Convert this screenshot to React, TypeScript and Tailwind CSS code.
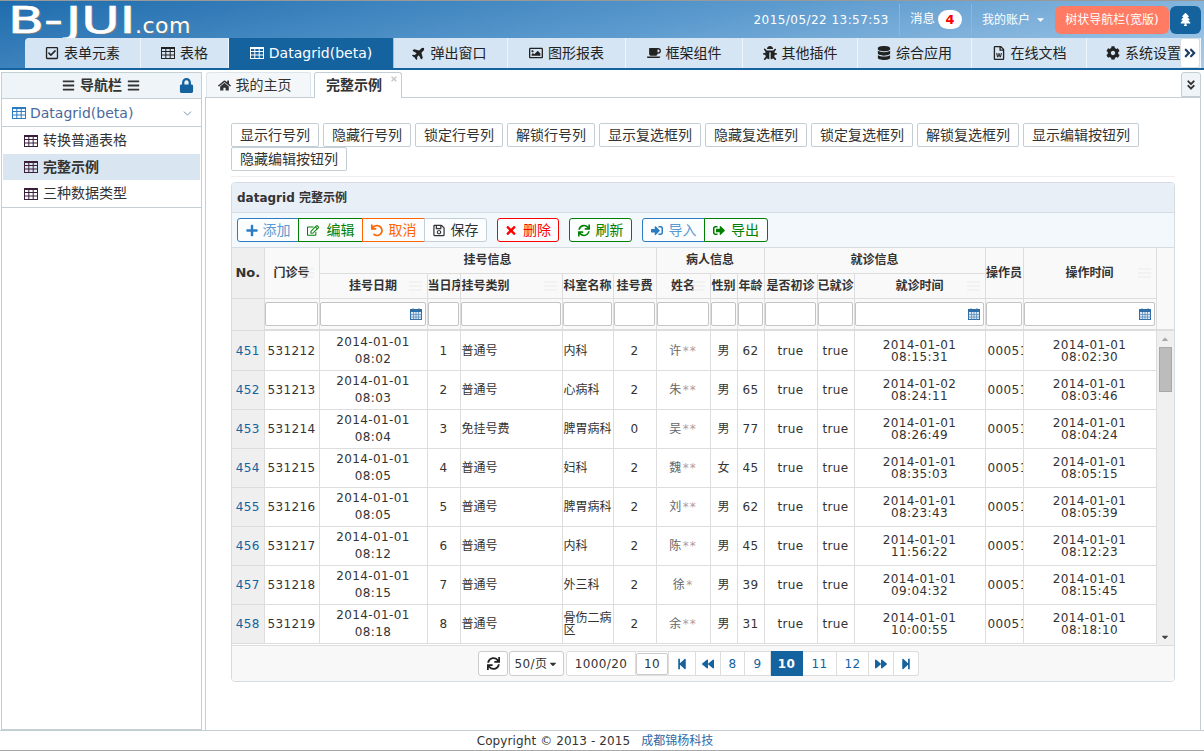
import React from "react";
import { ChevronDown } from "lucide-react";
import {
  FaRegCheckSquare, FaPlane, FaRegImage, FaCoffee, FaBug, FaDatabase, FaRegFileWord, FaCog,
  FaAngleDoubleRight, FaAngleDoubleDown, FaBars, FaLock, FaHome, FaPlus, FaRegEdit, FaUndo, FaRegSave,
  FaTimes, FaSync, FaSignInAlt, FaSignOutAlt, FaTree, FaStepBackward, FaBackward, FaForward,
  FaStepForward, FaCaretDown, FaCaretUp,
} from "react-icons/fa";

function GridIcon({ cls = "" }: { cls?: string }) {
  return (
    <svg viewBox="0 0 14 12" className={"inline-block w-[14px] h-[12px] " + cls} fill="none" stroke="currentColor" strokeWidth="1">
      <rect x="0.5" y="0.5" width="13" height="11" strokeWidth="1" />
      <path d="M0.5 1.5H13.5" />
      <path d="M0.5 4.5H13.5M0.5 8H13.5M4.8 0.5V11.5M9.2 0.5V11.5" />
    </svg>
  );
}

function CalIcon() {
  return (
    <svg viewBox="0 0 12 12" className="absolute right-[3px] top-[5px] w-[12px] h-[12px]" fill="none">
      <rect x="0.5" y="1.5" width="11" height="10" fill="#dbe7f3" stroke="#2f6da8" />
      <rect x="0.5" y="1.5" width="11" height="2.5" fill="#2f6da8" />
      <path d="M3 0.5V2.5M9 0.5V2.5" stroke="#2f6da8" strokeWidth="1.4" />
      <path d="M0.5 6.5H11.5M0.5 9H11.5M3.5 4V11.5M6 4V11.5M8.5 4V11.5" stroke="#5e8fbd" strokeWidth="0.8" />
    </svg>
  );
}

const topTabs = [
  { w: "w-[116px]", icon: <FaRegCheckSquare />, t: "表单元素", cls: "rounded-tl-[4px]" },
  { w: "w-[88px]", icon: <GridIcon />, t: "表格" },
  { w: "w-[165px]", icon: <GridIcon />, t: "Datagrid(beta)", active: true },
  { w: "w-[114px]", icon: <FaPlane className="-rotate-45" />, t: "弹出窗口", cls: "pr-[3px]" },
  { w: "w-[118px]", icon: <FaRegImage />, t: "图形报表" },
  { w: "w-[117px]", icon: <FaCoffee />, t: "框架组件" },
  { w: "w-[115px]", icon: <FaBug />, t: "其他插件" },
  { w: "w-[114px]", icon: <FaDatabase />, t: "综合应用" },
  { w: "w-[115px]", icon: <FaRegFileWord />, t: "在线文档" },
  { w: "w-[114px]", icon: <FaCog />, t: "系统设置" },
];

const colBtns = [
  ["显示行号列", "w-[88px]"], ["隐藏行号列", "w-[88px]"], ["锁定行号列", "w-[88px]"], ["解锁行号列", "w-[88px]"],
  ["显示复选框列", "w-[102px]"], ["隐藏复选框列", "w-[102px]"], ["锁定复选框列", "w-[102px]"], ["解锁复选框列", "w-[102px]"],
  ["显示编辑按钮列", "w-[116px]"], ["隐藏编辑按钮列", "w-[116px]"],
];

const widths = [32, 55, 108, 33, 102, 51, 43, 54, 27, 27, 53, 37, 131, 38, 133];

const rows = [
  [451, 531212, "2014-01-01", "08:02", 1, "普通号", "内科", 2, "许", "**", "男", 62, "2014-01-01", "08:15:31", "2014-01-01", "08:02:30"],
  [452, 531213, "2014-01-01", "08:03", 2, "普通号", "心病科", 2, "朱", "**", "男", 65, "2014-01-02", "08:24:11", "2014-01-01", "08:03:46"],
  [453, 531214, "2014-01-01", "08:04", 3, "免挂号费", "脾胃病科", 0, "吴", "**", "男", 77, "2014-01-01", "08:26:49", "2014-01-01", "08:04:24"],
  [454, 531215, "2014-01-01", "08:05", 4, "普通号", "妇科", 2, "魏", "**", "女", 45, "2014-01-01", "08:35:03", "2014-01-01", "08:05:15"],
  [455, 531216, "2014-01-01", "08:05", 5, "普通号", "脾胃病科", 2, "刘", "**", "男", 62, "2014-01-01", "08:23:43", "2014-01-01", "08:05:39"],
  [456, 531217, "2014-01-01", "08:12", 6, "普通号", "内科", 2, "陈", "**", "男", 45, "2014-01-01", "11:56:22", "2014-01-01", "08:12:23"],
  [457, 531218, "2014-01-01", "08:15", 7, "普通号", "外三科", 2, "徐", "*", "男", 39, "2014-01-01", "09:04:32", "2014-01-01", "08:15:45"],
  [458, 531219, "2014-01-01", "08:18", 8, "普通号", "骨伤二病区", 2, "余", "**", "男", 31, "2014-01-01", "10:00:55", "2014-01-01", "08:18:10"],
] as const;

function Grip() {
  return (
    <span className="absolute right-[5px] top-1/2 -translate-y-1/2 flex flex-col gap-[3px] w-[13px]">
      <i className="block h-[1px] bg-[#ececec]" />
      <i className="block h-[1px] bg-[#ececec]" />
      <i className="block h-[1px] bg-[#ececec]" />
    </span>
  );
}

function Th({ children, grip, rowSpan, colSpan, cls = "" }: { children: React.ReactNode; grip?: boolean; rowSpan?: number; colSpan?: number; cls?: string }) {
  return (
    <th rowSpan={rowSpan} colSpan={colSpan} className={"relative border border-[#dddddd] p-0 text-center text-[12px] font-bold text-[#333] whitespace-nowrap overflow-hidden " + cls}>
      {children}
      {grip && <Grip />}
    </th>
  );
}

function FilterCell({ cal }: { cal?: boolean }) {
  return (
    <td className="border border-[#dddddd] pl-0 pr-[1px] py-0 h-[32px]">
      <div className="relative h-[24px] border border-[#c4c4c4] rounded-[2px] bg-white">
        {cal && <CalIcon />}
      </div>
    </td>
  );
}

function ToolBtn({ icon, text, color, border, w, cls = "", iconColor, gap = "gap-[6px]" }: { icon: React.ReactNode; text: string; color: string; border: string; w: string; cls?: string; iconColor?: string; gap?: string }) {
  return (
    <button className={`${w} shrink-0 h-[24px] bg-white/70 border ${border} ${color} text-[14px] flex items-center justify-center ${gap} ${cls}`}>
      <span className={`w-[12px] flex justify-center text-[13px] ${iconColor ?? ""}`}>{icon}</span>
      {text}
    </button>
  );
}

function PageBtn({ children, w, cls = "" }: { children: React.ReactNode; w: string; cls?: string }) {
  return (
    <div className={`${w} shrink-0 h-[25px] flex items-center justify-center border-y border-r border-[#dddddd] bg-white text-[12px] tracking-[0.4px] text-[#14639f] ${cls}`}>{children}</div>
  );
}

export default function App() {
  return (
    <div className="relative w-[1204px] h-[751px] overflow-hidden bg-white text-[#333] [font-family:'DejaVu_Sans','Noto_Sans_CJK_SC',sans-serif] flex flex-col">
      {/* top header */}
      <header className="h-[70px] shrink-0 border-t border-[#999] bg-[linear-gradient(170deg,#1f6cad_0%,#5b9ace_50%,#aacdea_100%)] border-b-[2px] border-b-[#14639f] flex flex-col">
        <div className="h-[37px] shrink-0 flex items-center">
          <div className="ml-[8px] w-[184px] h-[37px] flex items-end whitespace-nowrap text-white [text-shadow:1px_1px_0_#7a7a7a]">
            <span className="inline-block w-[127px] text-[38px] leading-[36px] origin-left scale-x-[1.38] [-webkit-text-stroke:0.7px_white]">B-JUI</span>
            <span className="text-[22px] leading-[24px] tracking-[0.5px]">.com</span>
          </div>
          <div className="ml-auto flex items-center h-[37px] text-white">
            <span className="text-[12px] tracking-[0.45px] mr-[10px]">2015/05/22 13:57:53</span>
            <span className="h-[32px] w-[1px] bg-[#8db5da]" />
            <span className="text-[12.5px] ml-[10px]">消息</span>
            <span className="ml-[3px] w-[24px] h-[19px] rounded-full bg-white text-[#f00] text-[13px] font-bold flex items-center justify-center">4</span>
            <span className="h-[32px] w-[1px] bg-[#8db5da] ml-[9px]" />
            <span className="text-[12px] ml-[10px]">我的账户</span>
            <FaCaretDown className="text-[11px] ml-[5px] text-white" />
            <span className="ml-[9px] w-[114px] h-[28px] rounded-[6px] bg-[#ff7b63] text-[12px] flex items-center justify-center">树状导航栏(宽版)</span>
            <span className="ml-[1px] mr-[3px] w-[31px] h-[28px] rounded-[6px] bg-[#14639f] flex items-center justify-center text-[13px]"><FaTree /></span>
          </div>
        </div>
        <nav className="flex-1 relative flex pl-[25px] overflow-hidden">
          {topTabs.map((t) => (
            <div key={t.t} className={`${t.w} shrink-0 h-full flex items-center justify-center gap-[5px] text-[14px] border-r border-white/60 ${t.active ? "bg-[#14639f] text-white" : "bg-[#d6e5f3] text-[#222]"} ${t.cls ?? ""}`}>
              <span className="text-[14px] flex items-center">{t.icon}</span>
              <span>{t.t}</span>
            </div>
          ))}
          <div className="absolute right-[4px] top-0 h-[30px] w-[20px] bg-white border border-[#d5dde3] rounded-[3px] flex items-center justify-center text-[14px] text-[#1f3f66]"><FaAngleDoubleRight /></div>
        </nav>
      </header>

      <div className="flex-1 flex min-h-0 pr-[3px] pl-[1px]">
        {/* sidebar */}
        <aside className="w-[201px] shrink-0 mt-[2px] border border-[#c3ced5] bg-white flex flex-col">
          <div className="h-[26px] shrink-0 relative flex items-center justify-center gap-[5px] pr-[1px] bg-[#eff4f8] border-b border-[#c3ced5] text-[14px] font-bold text-[#333]">
            <FaBars className="text-[13px]" />导航栏<FaBars className="text-[13px]" />
            <FaLock className="absolute right-[7px] top-[5px] text-[#14639f] text-[15px]" />
          </div>
          <div className="h-[28px] shrink-0 flex items-center pl-[10px] pt-[1px] gap-[4px] border-b border-[#c3ced5] bg-white text-[14px] text-[#4a6a9c]">
            <GridIcon cls="text-[#2b7cc0]" />Datagrid(beta)
            <ChevronDown size={13} strokeWidth={1.5} className="ml-auto mr-[7px] text-[#5a7aa8]" />
          </div>
          <div className="border-b border-[#c3ced5] h-[81px] px-[1px] flex flex-col text-[14px] text-[#333]">
            {["转换普通表格", "完整示例", "三种数据类型"].map((t, i) => (
              <div key={t} className={`flex items-center pl-[21px] gap-[5px] ${i === 1 ? "h-[26px] bg-[#d9e6f2] font-bold" : "h-[27px]"}`}>
                <GridIcon cls="text-[#3a1f3a]" />{t}
              </div>
            ))}
          </div>
        </aside>

        {/* main */}
        <main className="ml-[3px] flex-1 min-w-0 flex flex-col">
          <div className="h-[28px] shrink-0 flex items-end relative border-b border-[#c3ced5]">
            <div className="ml-[1px] w-[105px] h-[25px] pr-[8px] bg-[#f3f7fa] border border-b-0 border-[#dfe6eb] rounded-t-[3px] flex items-center justify-center gap-[5px] text-[14px]"><FaHome className="text-[13px]" />我的主页</div>
            <div className="relative ml-[3px] -mb-[1px] w-[88px] h-[26px] pr-[8px] bg-white border border-b-0 border-[#c3ced5] rounded-t-[3px] flex items-center justify-center text-[14px] font-bold">
              完整示例
              <FaTimes className="absolute right-[3px] top-[2px] text-[8px] text-[#c8c8c8]" />
            </div>
            <div className="absolute right-0 bottom-0 w-[20px] h-[25px] bg-[#eff4f8] border border-[#c3ced5] rounded-t-[3px] flex items-center justify-center text-[12px]"><FaAngleDoubleDown /></div>
          </div>
          <div className="flex-1 min-h-0 border-x border-[#c3ced5] px-[25px] pt-[25px]">
            <div className="flex flex-wrap gap-x-[4px] w-[944px] pb-[5px] border-b border-[#eeeeee]">
              {colBtns.map(([t, w]) => (
                <button key={t} className={`${w} h-[24px] bg-white border border-[#c3ced5] rounded-[2px] text-[14px] text-[#333] flex items-center justify-center`}>{t}</button>
              ))}
            </div>
            {/* panel */}
            <section className="mt-[5px] w-[944px] h-[500px] border border-[#d5dde3] rounded-[4px] flex flex-col overflow-hidden">
              <div className="h-[30px] shrink-0 bg-[#e8eff7] border-b border-[#d5dde3] flex items-center pl-[5px] text-[12px] font-bold text-[#333]">datagrid 完整示例</div>
              <div className="h-[35px] shrink-0 bg-[#f3f8fc] border-b border-[#d5dde3] flex items-center pl-[5px]">
                <ToolBtn icon={<FaPlus />} text="添加" gap="gap-[5px]" w="w-[62px]" border="border-[#2b7cc0]" color="text-[#5a9ad0]" iconColor="text-[#2b7cc0]" cls="rounded-l-[3px]" />
                <ToolBtn icon={<FaRegEdit />} text="编辑" gap="gap-[8px]" w="w-[65px]" border="border-[#008000]" color="text-[#008000]" cls="-ml-[1px]" />
                <ToolBtn icon={<FaUndo />} text="取消" w="w-[63px]" border="border-[#ff6600]" color="text-[#ff6600]" cls="-ml-[1px]" />
                <ToolBtn icon={<FaRegSave />} text="保存" w="w-[63px]" border="border-[#c3ced5]" color="text-[#333]" cls="-ml-[1px] rounded-r-[3px]" />
                <ToolBtn icon={<FaTimes />} text="删除" w="w-[62px]" border="border-[#ff0000]" color="text-[#ff0000]" cls="ml-[10px] rounded-[3px]" />
                <ToolBtn icon={<FaSync />} text="刷新" w="w-[63px]" border="border-[#008000]" color="text-[#008000]" cls="ml-[10px] rounded-[3px]" />
                <ToolBtn icon={<FaSignInAlt />} text="导入" w="w-[63px]" border="border-[#2b7cc0]" color="text-[#5a9ad0]" iconColor="text-[#2b7cc0]" cls="ml-[10px] rounded-l-[3px]" />
                <ToolBtn icon={<FaSignOutAlt />} text="导出" w="w-[64px]" border="border-[#008000]" color="text-[#008000]" cls="-ml-[1px] rounded-r-[3px]" />
              </div>

              {/* grid head */}
              <div className="shrink-0 bg-[#f9f9f9] h-[83px] border-b-[2px] border-[#dddddd]">
                <table className="table-fixed border-collapse w-[924px]">
                  <colgroup>{widths.map((w, i) => <col key={i} style={{ width: w }} />)}</colgroup>
                  <thead>
                    <tr className="h-[25px]">
                      <Th rowSpan={2} cls="bg-[#efefef] border-l-0 border-t-0 text-[13px]">No.</Th>
                      <Th rowSpan={2} grip cls="border-t-0">门诊号</Th>
                      <Th colSpan={5} cls="border-t-0">挂号信息</Th>
                      <Th colSpan={3} cls="border-t-0">病人信息</Th>
                      <Th colSpan={3} cls="border-t-0">就诊信息</Th>
                      <Th rowSpan={2} cls="border-t-0">操作员</Th>
                      <Th rowSpan={2} grip cls="border-t-0">操作时间</Th>
                    </tr>
                    <tr className="h-[25px]">
                      <Th grip>挂号日期</Th>
                      <Th>当日序</Th>
                      <Th grip cls="!text-left pl-[1px]">挂号类别</Th>
                      <Th>科室名称</Th>
                      <Th>挂号费</Th>
                      <Th grip>姓名</Th>
                      <Th>性别</Th>
                      <Th>年龄</Th>
                      <Th>是否初诊</Th>
                      <Th>已就诊</Th>
                      <Th grip>就诊时间</Th>
                    </tr>
                    <tr>
                      <td className="border border-[#dddddd] border-l-0 bg-[#efefef] h-[32px]" />
                      <FilterCell /><FilterCell cal /><FilterCell /><FilterCell /><FilterCell /><FilterCell /><FilterCell /><FilterCell /><FilterCell /><FilterCell /><FilterCell /><FilterCell cal /><FilterCell /><FilterCell cal />
                    </tr>
                  </thead>
                </table>
              </div>

              {/* grid body */}
              <div className="flex h-[314px] shrink-0">
                <table className="table-fixed border-collapse w-[924px] h-[312px] text-[12px] text-[#333] tracking-[0.4px] [&_td]:pt-[1px]">
                  <colgroup>{widths.map((w, i) => <col key={i} style={{ width: w }} />)}</colgroup>
                  <tbody>
                    {rows.map((r) => (
                      <tr key={r[0]} className="h-[39px]">
                        <td className="border border-[#dddddd] border-l-0 border-t-0 bg-[#efefef] text-center text-[#14639f] p-0">{r[0]}</td>
                        <td className="border border-[#dddddd] border-t-0 text-center p-0">{r[1]}</td>
                        <td className="border border-[#dddddd] border-t-0 text-center p-0 leading-[17px]">{r[2]}<br />{r[3]}</td>
                        <td className="border border-[#dddddd] border-t-0 text-center p-0">{r[4]}</td>
                        <td className="border border-[#dddddd] border-t-0 pl-[1px] p-0 tracking-normal">{r[5]}</td>
                        <td className="border border-[#dddddd] border-t-0 pl-[1px] p-0 leading-[12px] tracking-normal">{r[6]}</td>
                        <td className="border border-[#dddddd] border-t-0 text-center p-0">{r[7]}</td>
                        <td className="border border-[#dddddd] border-t-0 text-center p-0 text-[#666]">{r[8]}<span className="text-[#b09a9a] ml-[1px] tracking-[1px]">{r[9]}</span></td>
                        <td className="border border-[#dddddd] border-t-0 text-center p-0 tracking-normal">{r[10]}</td>
                        <td className="border border-[#dddddd] border-t-0 text-center p-0">{r[11]}</td>
                        <td className="border border-[#dddddd] border-t-0 text-center p-0">true</td>
                        <td className="border border-[#dddddd] border-t-0 text-center p-0">true</td>
                        <td className="border border-[#dddddd] border-t-0 text-center p-0 leading-[12px]">{r[12]}<br />{r[13]}</td>
                        <td className="border border-[#dddddd] border-t-0 p-0 pl-[2px] overflow-hidden whitespace-nowrap">000519</td>
                        <td className="border border-[#dddddd] border-t-0 text-center p-0 leading-[12px]">{r[14]}<br />{r[15]}</td>
                      </tr>
                    ))}
                  </tbody>
                </table>
                <div className="w-[18px] h-[314px] bg-[#f0f0f0] flex flex-col items-center">
                  <FaCaretUp className="text-[10px] text-[#a8a8a8] mt-[3px]" />
                  <div className="mt-[3px] w-[13px] h-[45px] bg-[#bcbcbc] border border-[#a8a8a8]" />
                  <FaCaretDown className="text-[10px] text-[#444] mt-auto mb-[3px]" />
                </div>
              </div>

              {/* pager */}
              <div className="flex-1 bg-[#f8f8f8] border-t border-[#dddddd] flex items-center pl-[246px] text-[12px] tracking-[0.4px]">
                <div className="w-[30px] h-[25px] shrink-0 border border-[#cccccc] rounded-[3px] bg-white flex items-center justify-center text-[13px] text-[#222]"><FaSync /></div>
                <div className="ml-[1px] w-[55px] h-[25px] shrink-0 border border-[#cccccc] rounded-[3px] bg-white flex items-center justify-center gap-[1px] text-[#333]">50/页<FaCaretDown className="text-[10px]" /></div>
                <div className="ml-[2px] w-[70px] h-[25px] shrink-0 border border-[#dddddd] rounded-l-[3px] bg-white flex items-center justify-center text-[#333]">1000/20</div>
                <div className="h-[25px] w-[33px] shrink-0 flex items-center justify-center border-y border-r border-[#dddddd] bg-white">
                  <div className="w-[32px] h-[22px] border border-[#cccccc] rounded-[2px] flex items-center justify-center text-[#333]">10</div>
                </div>
                <PageBtn w="w-[27px]"><FaStepBackward className="text-[12px]" /></PageBtn>
                <PageBtn w="w-[25px]"><FaBackward className="text-[12px]" /></PageBtn>
                <PageBtn w="w-[24px]" cls="text-[#5b7fa5]">8</PageBtn>
                <PageBtn w="w-[26px]" cls="text-[#5b7fa5]">9</PageBtn>
                <PageBtn w="w-[32px]" cls="!bg-[#14639f] !text-white font-bold !border-[#14639f]">10</PageBtn>
                <PageBtn w="w-[34px]">11</PageBtn>
                <PageBtn w="w-[32px]">12</PageBtn>
                <PageBtn w="w-[25px]"><FaForward className="text-[12px]" /></PageBtn>
                <PageBtn w="w-[25px]" cls="rounded-r-[3px]"><FaStepForward className="text-[12px]" /></PageBtn>
              </div>
            </section>
          </div>
        </main>
      </div>

      {/* footer */}
      <footer className="h-[21px] shrink-0 border-t border-[#c3ced5] border-b border-b-[#a8a8a8] flex items-center justify-center text-[12px] text-[#333] pr-[14px]">
        <span className="tracking-[0.1px]">Copyright © 2013 - 2015</span>
        <span className="ml-[11px] text-[#2f6aa5]">成都锦杨科技</span>
      </footer>
    </div>
  );
}
